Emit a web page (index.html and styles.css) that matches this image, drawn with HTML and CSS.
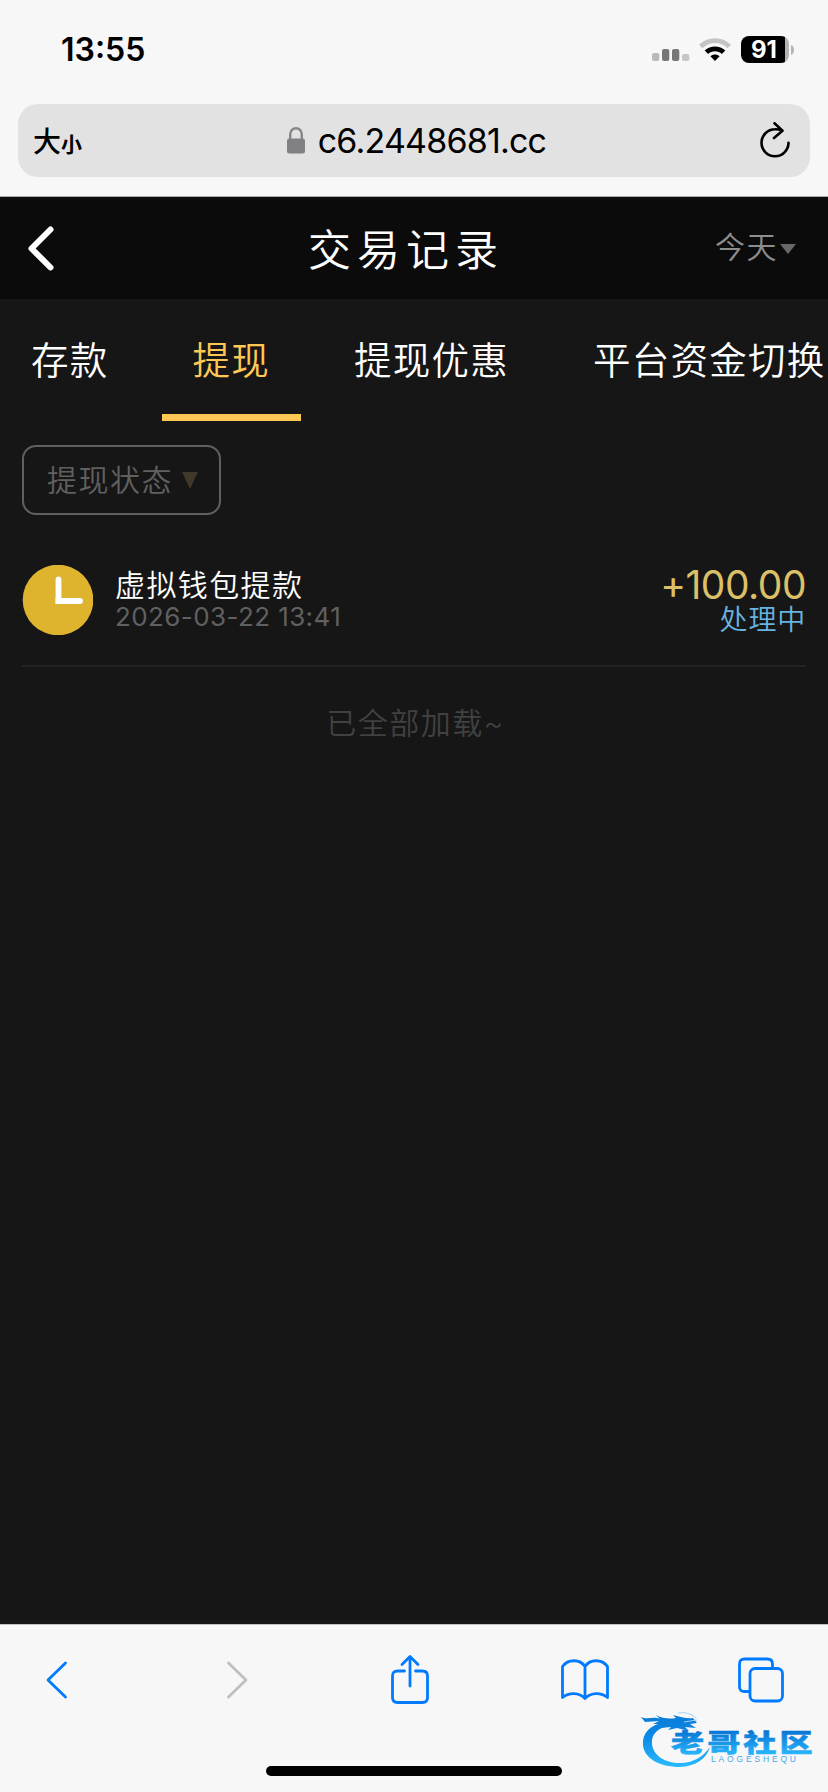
FILE: index.html
```html
<!DOCTYPE html>
<html lang="zh-CN">
<head>
<meta charset="utf-8">
<title>交易记录</title>
<link rel="stylesheet" href="styles.css">
</head>
<body>
<div class="screen">
  <header class="browser-top">
    <div class="status">
      <span class="time">13:55</span>
      <div class="indicators">
        <svg class="signal" width="38" height="28" viewBox="0 0 38 28">
          <rect x="0" y="17" width="7.3" height="8" rx="2" fill="#b9b9b9"/>
          <rect x="10" y="13" width="7.3" height="12" rx="2" fill="#777"/>
          <rect x="20" y="13" width="7.3" height="12" rx="2" fill="#777"/>
          <rect x="30" y="18" width="7.3" height="7" rx="2" fill="#c6c6c6"/>
        </svg>
        <svg class="wifi" width="32" height="28" viewBox="0 0 32 28">
          <path d="M0 7.7C8.8-.9 23.200-.9 32 7.700L28.600 11.200C21.600 4.300 10.400 4.300 3.400 11.200Z" fill="#c4c4c4"/>
          <path d="M5.700 13.600C11.400 8 20.600 8 26.300 13.600L22.900 16.900C19.100 13.200 12.900 13.200 9.100 16.900Z"/>
          <path d="M11.400 19.300C14 16.800 18 16.800 20.600 19.300L16 24Z"/>
        </svg>
        <div class="battery">
          <span class="battery-level">91</span>
          <svg class="battery-cap" width="3" height="10" viewBox="0 0 3 10"><path d="M0 0C4 1 4 9 0 10Z" fill="#b4b4b4"/></svg>
        </div>
      </div>
    </div>
    <div class="address">
      <span class="text-size"><span class="big">大</span><span class="small">小</span></span>
      <div class="url">
        <svg width="18" height="27" viewBox="0 0 18 27">
          <path d="M3.200 13V7.500C3.200-.8 14.800-.8 14.800 7.500V13" fill="none" stroke="#858589" stroke-width="2.400"/>
          <rect x="0" y="11.500" width="18" height="15" rx="2.500" fill="#808085"/>
        </svg>
        <span class="host">c6.2448681.cc</span>
      </div>
      <svg class="reload" width="32" height="38" viewBox="0 0 32 38" fill="none" stroke="#000" stroke-width="2.600" stroke-linecap="round" stroke-linejoin="round">
        <path d="M29.500 20A13.500 13.500 0 1 1 16 6.500C18.500 6.400 21 7 22.800 7.700M15.500 .5L23.500 8L15 15.200" transform="translate(1 .8)"/>
      </svg>
    </div>
  </header>

  <main class="app">
    <div class="titlebar">
      <svg class="back" width="26" height="45" viewBox="0 0 26 45"><path d="M22.500 3.500L3.500 22.500L22.500 41.500" fill="none" stroke="#fff" stroke-width="6" stroke-linecap="round" stroke-linejoin="round"/></svg>
      <h1 class="title">交易记录</h1>
      <div class="period"><span>今天</span><i class="caret"></i></div>
    </div>
    <nav class="tabs">
      <span class="tab">存款</span>
      <span class="tab active">提现</span>
      <span class="tab">提现优惠</span>
      <span class="tab">平台资金切换</span>
    </nav>
    <section class="content">
      <div class="filter"><span class="filter-label">提现状态</span><i class="filter-caret"></i></div>
      <article class="record">
        <svg class="clock" width="71" height="70" viewBox="0 0 71 70">
          <circle cx="36" cy="35" r="35.300" fill="#deb42f"/>
          <path d="M36.500 14.500V36H58" fill="none" stroke="#fff" stroke-width="5.800" stroke-linecap="round"/>
          <path d="M33.600 33H40V38.900H33.600Z" fill="#fff"/>
        </svg>
        <div class="info">
          <div class="name">虚拟钱包提款</div>
          <div class="date">2026-03-22 13:41</div>
        </div>
        <div class="result">
          <div class="amount">+100.00</div>
          <div class="state">处理中</div>
        </div>
      </article>
      <p class="end">已全部加载~</p>
    </section>
  </main>

  <footer class="browser-bottom">
    <div class="tools">
      <span class="tool back-tool"><svg width="22" height="38" viewBox="0 0 22 38"><path d="M19.500 2L2 19L19.500 36" class="line"/></svg></span>
      <span class="tool forward"><svg width="22" height="38" viewBox="0 0 22 38"><path d="M2.500 2L20 19L2.500 36" class="line off"/></svg></span>
      <span class="tool share"><svg width="38" height="50" viewBox="0 0 38 50"><path d="M13.500 17H6.500Q1.500 17 1.500 22V43.500Q1.500 48.500 6.500 48.500H31.500Q36.500 48.500 36.500 43.500V22Q36.500 17 31.500 17H24.500M19 32V3M11 10.500L19 2.500L27 10.500" class="line"/></svg></span>
      <span class="tool"><svg width="48" height="42" viewBox="0 0 48 42"><path d="M24 7.500C19-.2 7-.2 1.500 7.500V38.500C8 33.200 18 33.200 24 39.500C30 33.200 40 33.200 46.500 38.500V7.500C41-.2 29-.2 24 7.500V39" class="line"/></svg></span>
      <span class="tool"><svg width="46" height="46" viewBox="0 0 46 46"><path d="M10.500 34.500H6.500Q1.500 34.500 1.500 29.500V7Q1.500 2 6.500 2H29.500Q34.500 2 34.500 7V11" class="line"/><rect x="12" y="11.500" width="32.500" height="32.500" rx="5" class="line"/></svg></span>
    </div>
    <div class="home-indicator"></div>
    <svg class="watermark" width="174" height="62" viewBox="0 0 174 62">
      <defs>
        <linearGradient id="blue" gradientUnits="userSpaceOnUse" x1="0" y1="6" x2="0" y2="58"><stop offset="0" stop-color="#087cd8"/><stop offset=".4" stop-color="#0b8ae6"/><stop offset="1" stop-color="#2bbcff"/></linearGradient>
        <linearGradient id="word" gradientUnits="userSpaceOnUse" x1="0" y1="-21" x2="0" y2="2"><stop offset="0" stop-color="#0878d6"/><stop offset="1" stop-color="#29b5fb"/></linearGradient>
      </defs>
      <g fill="url(#blue)">
        <path d="M25 12C9 15 2 24 3 35C4 48 19 57 40 57C55 56 66 50 70 37C63 47 53 53 40 53C24 53 13 45 12 34C11 24 18 17 31 16Z"/>
        <path d="M1 7C7 10 13 6 20 9L16 5C23 9 30 9 36 8L33 5C41 7 47 9 53 8L57 13L50 14L56 18L45 17L49 21L37 18L28 20L31 17L20 18L25 14L13 14L19 11L5 12Z"/>
      </g>
      <path d="M38 3Q48 1 56 8M44 12L57 10" stroke="#a5d2f2" stroke-width="1" fill="none"/>
      <text transform="translate(31 42.200) scale(1.300 .97)" class="mark-name">老哥社区</text>
      <text x="71" y="52" class="mark-latin" textLength="85">LAOGESHEQU</text>
    </svg>
  </footer>
</div>
</body>
</html>
```
FILE: styles.css
```css
* { box-sizing: border-box; }
body { margin: 0; font-family: Inter, "Noto Sans CJK SC", sans-serif; }
svg { display: block; flex: none; }
.screen { display: flex; flex-direction: column; width: 828px; height: 1792px; overflow: hidden; background: #161616; }

.browser-top { height: 197px; flex: none; padding: 0 18px; background: #f7f7f7; border-bottom: 1px solid #a9adac; }
.status { display: flex; justify-content: space-between; height: 104px; padding: 30px 16px 0 43px; }
.time { font-size: 32px; font-weight: 600; line-height: 40px; letter-spacing: 0; }
.indicators { display: flex; align-items: flex-start; padding-top: 6px; }
.wifi { margin-left: 9px; margin-top: 1px; }
.battery { display: flex; align-items: center; gap: 2px; margin-left: 10px; }
.battery-level { width: 48px; height: 27px; padding-right: 2px; border-radius: 8px; background: linear-gradient(90deg, #000 44px, #b4b4b4 44px); color: #fff; font-size: 24px; font-weight: 700; line-height: 28px; text-align: center; }
.address { display: flex; align-items: center; justify-content: space-between; height: 73px; padding: 0 20px 0 15px; border-radius: 20px; background: #e2e2e3; }
.text-size { display: flex; align-items: baseline; width: 50px; padding-top: 2px; font-family: "Noto Sans CJK SC", sans-serif; font-weight: 500; line-height: 40px; }
.big { font-size: 28px; }
.small { font-size: 21px; font-weight: 700; }
.url { display: flex; align-items: center; gap: 13px; margin-right: 8px; }
.host { font-size: 34px; line-height: 44px; letter-spacing: -.8px; }

.app { flex: 1; }
.titlebar { display: grid; grid-template-columns: 188px 1fr 200px; align-items: center; height: 102px; padding: 0 32px 0 28px; background: #0b0b0b; color: #fff; }
.title { margin: 0; padding-top: 3px; font-size: 43px; font-weight: 350; line-height: 60px; letter-spacing: 6px; text-align: center; }
.period { display: flex; align-items: center; justify-content: flex-end; gap: 2px; height: 48px; padding-bottom: 3px; color: #8d8d8d; font-size: 30px; font-weight: 350; line-height: 44px; letter-spacing: 1.5px; }
.caret { margin-top: 5px; border: solid transparent; border-width: 10px 8px 0; border-top-color: #686868; }
.tabs { display: flex; gap: 22px; height: 122px; overflow: hidden; color: #fff; }
.tab { flex: none; height: 122px; padding: 35px 31px 0 31px; font-size: 37.500px; font-weight: 350; line-height: 54px; letter-spacing: 1.250px; white-space: nowrap; }
.active { color: #ffc753; border-bottom: 7px solid #ffc753; }
.content { padding: 24px 22px 0; }
.filter { display: flex; align-items: center; gap: 9px; width: 199px; height: 70px; padding-left: 23px; border: 2px solid #606060; border-radius: 14px; color: #606060; font-size: 30px; font-weight: 350; letter-spacing: 1.500px; }
.filter-label { padding-bottom: 4px; }
.filter-caret { margin-top: 1px; border: solid transparent; border-width: 17px 8px 0; border-top-color: #40392a; }
.record { display: flex; height: 152px; padding-top: 50px; border-bottom: 2px solid #232323; }
.info { margin-left: 22px; }
.name { height: 37px; color: #fff; font-size: 30px; font-weight: 350; line-height: 40px; letter-spacing: 1.400px; }
.date { color: #606060; font-size: 26px; line-height: 30px; letter-spacing: .400px; }
.result { margin-left: auto; text-align: right; }
.amount { height: 39px; color: #dcc068; font-size: 39px; line-height: 40px; letter-spacing: -.500px; }
.state { color: #67b4e1; font-size: 28px; font-weight: 350; line-height: 32px; letter-spacing: .800px; }
.end { margin: 34px 0 0; padding-left: 3px; color: #414141; font-size: 30px; font-weight: 350; line-height: 44px; letter-spacing: 1.500px; text-align: center; }

.browser-bottom { position: relative; height: 168px; flex: none; border-top: 1px solid #c4c1c4; background: #f7f7f7; }
.tools { display: flex; align-items: center; justify-content: space-between; height: 109px; padding: 0 43px 0 34px; }
.tool { display: flex; justify-content: center; width: 48px; }
.back-tool { padding-right: 2px; }
.forward { padding-left: 7px; }
.share { padding-bottom: 2px; }
.line { fill: none; stroke: #007aff; stroke-width: 2.800px; stroke-linecap: round; stroke-linejoin: round; }
.off { stroke: #bfbfbf; }
.home-indicator { width: 296px; height: 10px; margin: 32px 0 0 266px; border-radius: 5px; background: #000; }
.watermark { position: absolute; left: 640px; top: 85px; overflow: visible; }
.mark-name { font-family: "Noto Sans CJK SC", sans-serif; font-size: 25.500px; font-weight: 900; letter-spacing: 2.300px; fill: url(#word); stroke: url(#word); stroke-width: .5px; }
.mark-latin { font-family: "Liberation Sans", sans-serif; font-size: 8.500px; fill: #48a8e9; }
```
